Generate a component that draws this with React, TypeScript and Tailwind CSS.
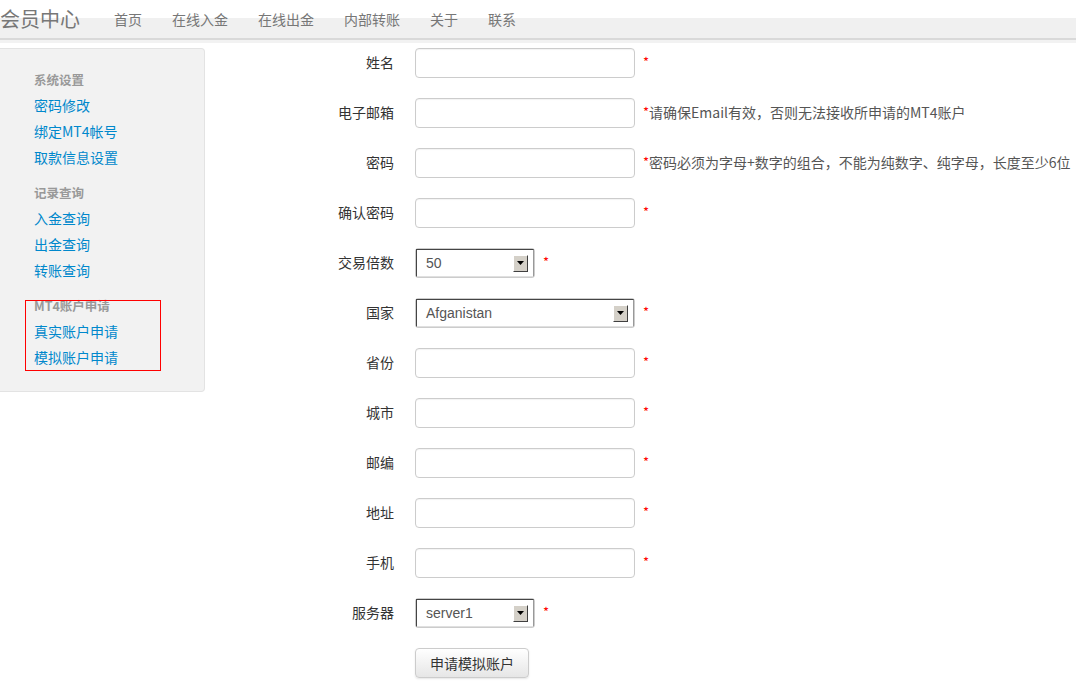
import React from "react";

const font = { fontFamily: '"Noto Sans CJK SC", "Liberation Sans", sans-serif' };

function Star() {
  return <span className="text-[#ff0000] text-[13px] leading-none relative -top-[1px]">*</span>;
}

function TextInput() {
  return <div className="w-[220px] h-[30px] border border-[#cccccc] rounded-[4px] bg-white shadow-[inset_0_1px_1px_rgba(0,0,0,0.05)]" />;
}

function Select({ value, width }: { value: string; width: string }) {
  return (
    <div className={`${width} h-[30px] border border-[#cccccc] rounded-[3px] bg-white p-0`}>
      <div className="h-full flex items-center border-t border-l border-t-[#444] border-l-[#444] border-r border-r-[#999] border-b border-b-[#e0e0e0] pl-[9px] pr-[5px]">
        <span className="flex-1 text-[14px] text-[#555]" style={{ fontFamily: '"Liberation Sans", Arial, sans-serif' }}>
          {value}
        </span>
        <div className="w-[15px] h-[17px] bg-[#d4d0c8] border border-t-white border-l-white border-r-[#404040] border-b-[#404040] flex items-center justify-center">
          <svg width="7" height="4" viewBox="0 0 7 4">
            <path d="M0 0H7L3.5 4Z" fill="#000" />
          </svg>
        </div>
      </div>
    </div>
  );
}

type Row = { label: string; field: React.ReactNode; help?: string };

export default function App() {
  const rows: Row[] = [
    { label: "姓名", field: <TextInput /> },
    { label: "电子邮箱", field: <TextInput />, help: "请确保Email有效，否则无法接收所申请的MT4账户" },
    { label: "密码", field: <TextInput />, help: "密码必须为字母+数字的组合，不能为纯数字、纯字母，长度至少6位" },
    { label: "确认密码", field: <TextInput /> },
    { label: "交易倍数", field: <Select value="50" width="w-[120px]" /> },
    { label: "国家", field: <Select value="Afganistan" width="w-[220px]" /> },
    { label: "省份", field: <TextInput /> },
    { label: "城市", field: <TextInput /> },
    { label: "邮编", field: <TextInput /> },
    { label: "地址", field: <TextInput /> },
    { label: "手机", field: <TextInput /> },
    { label: "服务器", field: <Select value="server1" width="w-[120px]" /> },
  ];

  const section = (title: string, links: string[], first = false) => (
    <div className={first ? "" : "mt-[9px]"}>
      <div className="h-[26px] flex items-center text-[12.5px] font-bold text-[#999999]">{title}</div>
      {links.map((l) => (
        <div key={l} className="h-[26px] flex items-center text-[14px] text-[#0088cc]">
          <span className="relative -top-[1px]">{l}</span>
        </div>
      ))}
    </div>
  );

  return (
    <div className="w-[1076px] h-[685px] overflow-hidden bg-white text-[#333]" style={font}>
      {/* navbar */}
      <div className="relative h-[43px]">
        <div className="h-[18px] bg-white" />
        <div className="h-[20px] bg-[#f0f0f0]" />
        <div className="h-[2px] bg-[#d9d9d9]" />
        <div className="h-[3px] bg-[#f2f2f2]" />
        <div className="absolute inset-x-0 top-0 h-[38px] flex items-center">
          <div className="text-[20px] text-[#777777] w-[99px] leading-none">会员中心</div>
          {["首页", "在线入金", "在线出金", "内部转账", "关于", "联系"].map((n) => (
            <div key={n} className="px-[15px] text-[14px] text-[#777777] leading-none">
              {n}
            </div>
          ))}
        </div>
      </div>

      <div className="flex mt-[5px]">
        {/* sidebar */}
        <div className="relative w-[205px] shrink-0 self-start bg-[#f2f2f2] border border-[#e3e3e3] border-l-0 rounded-r-[4px] pl-[34px] pt-[18px] pb-[20px]">
          {section("系统设置", ["密码修改", "绑定MT4帐号", "取款信息设置"], true)}
          {section("记录查询", ["入金查询", "出金查询", "转账查询"])}
          {section("MT4账户申请", ["真实账户申请", "模拟账户申请"])}
          <div className="absolute left-[25px] top-[251px] w-[136px] h-[71px] border border-[#ff0000]" />
        </div>

        {/* form */}
        <div className="flex flex-col gap-[20px]">
          {rows.map((r) => (
            <div key={r.label} className="flex items-center h-[30px]">
              <div className="w-[189px] text-right text-[14px] text-[#333] relative -top-[1px]">{r.label}</div>
              <div className="ml-[21px]">{r.field}</div>
              <div className="ml-[8px] text-[14px] text-[#555] whitespace-nowrap flex items-center relative -top-[1px]">
                <Star />
                {r.help && <span>{r.help}</span>}
              </div>
            </div>
          ))}
          <div className="flex h-[30px] items-center">
            <div className="w-[189px]" />
            <button className="ml-[21px] h-[30px] px-[14px] text-[14px] text-[#333] border border-[#cccccc] rounded-[4px] bg-gradient-to-b from-white to-[#e6e6e6] shadow-[0_1px_2px_rgba(0,0,0,0.1)]">
              申请模拟账户
            </button>
          </div>
        </div>
      </div>
    </div>
  );
}
